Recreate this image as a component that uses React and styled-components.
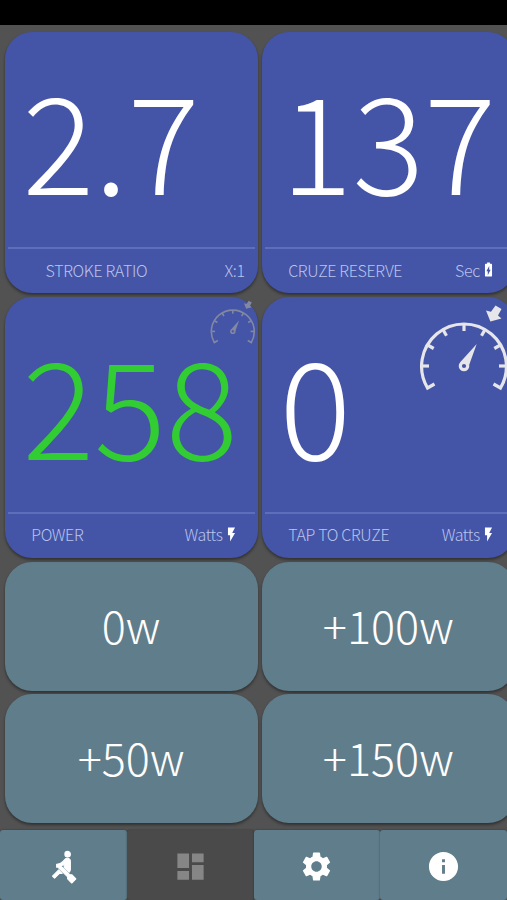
import React from 'react';
import styled, { createGlobalStyle } from 'styled-components';
import {
  MdBatteryChargingFull,
  MdDashboard,
  MdFlashOn,
  MdInfo,
  MdRowing,
  MdSettings,
} from 'react-icons/md';

const GlobalStyle = createGlobalStyle`
  * {
    box-sizing: border-box;
  }

  body {
    margin: 0;
    background: #525252;
    overflow: hidden;
  }
`;

const Screen = styled.div`
  display: flex;
  flex-direction: column;
  width: 507px;
  height: 900px;
  overflow: hidden;
  background: #525252;
  font-family: 'Noto Sans CJK SC', 'Noto Sans', sans-serif;
  font-weight: 300;
`;

const StatusBar = styled.div`
  flex: none;
  height: 25px;
  background: #000;
`;

const Board = styled.main`
  flex: 1;
  display: grid;
  grid-template-columns: 253px 253px;
  grid-template-rows: 261px 261px 129px 129px;
  gap: 3.8px 4.2px;
  padding: 7px 0 0 4.6px;
`;

const Card = styled.section`
  position: relative;
  display: flex;
  flex-direction: column;
  padding: 0 3px;
  border-radius: 27px;
  background: #4454a6;
  box-shadow: 0 2px 3px rgba(0, 0, 0, 0.4);
`;

const Value = styled.div`
  flex: 1;
  min-height: 0;
  padding-left: ${props => props.$indent}px;
  font-size: 134px;
  line-height: 210px;
  color: ${props => props.color || '#fff'};
`;

const Footer = styled.div`
  display: flex;
  align-items: center;
  height: 46px;
  padding: 0 ${props => props.$right}px 3px ${props => props.$left}px;
  border-top: 2px solid #5f6ebb;
  font-size: 16px;
  line-height: 24px;
  letter-spacing: -0.35px;
  color: #b9c4ee;
`;

const Unit = styled.span`
  display: flex;
  align-items: center;
  margin-left: auto;

  svg {
    color: #fff;
  }
`;

const GaugeIcon = styled.svg`
  position: absolute;
  left: ${props => props.$left}px;
  top: ${props => props.$top}px;
  width: ${props => props.$size}px;
  height: ${props => props.$size}px;
  color: ${props => props.color};
`;

const PresetButton = styled.button`
  padding: 0 0 3px;
  border: 0;
  border-radius: 27px;
  background: #607d8b;
  box-shadow: 0 2px 3px rgba(0, 0, 0, 0.4);
  color: #fff;
  font-family: inherit;
  font-weight: 200;
  font-size: 45px;
  line-height: 64px;
`;

const Nav = styled.nav`
  flex: none;
  display: grid;
  grid-template-columns: repeat(4, 1fr);
  height: 70px;
`;

const Tab = styled.button`
  display: flex;
  align-items: center;
  justify-content: center;
  padding: 3px 0 0;
  border: 0;
  border-radius: 3px;
  background: ${props => (props.$active ? '#4a4a4a' : '#607d8b')};
  box-shadow: 0 0 2px rgba(0, 0, 0, 0.4);
  color: ${props => (props.$active ? '#868686' : '#fff')};
`;

const RowingIcon = styled(MdRowing)`
  overflow: visible;

  path:not([fill='none']) {
    stroke: currentColor;
    stroke-width: 0.8;
    stroke-linejoin: round;
  }

  path[fill='none'] {
    display: none;
  }
`;

const ticks = [-90, -60, -30, 0, 30, 60, 90];

const Gauge = props => (
  <GaugeIcon viewBox="-45 -62 90 90" {...props}>
    <g fill="none" stroke="currentColor" strokeWidth="3.2">
      <path d="M-29.5 18L-36.5 22A42.4 42.4 0 1 1 36.5 22L29.5 18" />
      {ticks.map(angle => (
        <path key={angle} d="M0-42V-35" transform={`rotate(${angle})`} />
      ))}
      <circle r="3.7" />
    </g>
    <path d="M-3.6-4L12.7-22L4.4 1L2-3Z" fill="currentColor" />
    <path d="M26.4-44.5L22-55.5L27-54.2L31.5-60.5L37.5-57L34-50.5L37.5-47.5Z" fill="currentColor" />
  </GaugeIcon>
);

export default () => (
  <Screen>
    <GlobalStyle />
    <StatusBar />
    <Board>
      <Card>
        <Value $indent={15}>2.7</Value>
        <Footer $left={38} $right={10}>
          STROKE RATIO
          <Unit>X:1</Unit>
        </Footer>
      </Card>
      <Card>
        <Value $indent={16}>137</Value>
        <Footer $left={23.4} $right={15}>
          CRUZE RESERVE
          <Unit>
            Sec <MdBatteryChargingFull size={17} />
          </Unit>
        </Footer>
      </Card>
      <Card>
        <Value $indent={15} color="#32cd32">258</Value>
        <Footer $left={23.6} $right={15}>
          POWER
          <Unit>
            Watts <MdFlashOn size={17} />
          </Unit>
        </Footer>
        <Gauge $left={205.6} $top={3.6} $size={45.6} color="#8287a2" />
      </Card>
      <Card>
        <Value $indent={14.6}>0</Value>
        <Footer $left={23.4} $right={15}>
          TAP TO CRUZE
          <Unit>
            Watts <MdFlashOn size={17} />
          </Unit>
        </Footer>
        <Gauge $left={157} $top={7} $size={90} color="#e6e6ea" />
      </Card>
      <PresetButton>0w</PresetButton>
      <PresetButton>+100w</PresetButton>
      <PresetButton>+50w</PresetButton>
      <PresetButton>+150w</PresetButton>
    </Board>
    <Nav>
      <Tab><RowingIcon size={33} /></Tab>
      <Tab $active><MdDashboard size={35} /></Tab>
      <Tab><MdSettings size={35} /></Tab>
      <Tab><MdInfo size={35} /></Tab>
    </Nav>
  </Screen>
);
